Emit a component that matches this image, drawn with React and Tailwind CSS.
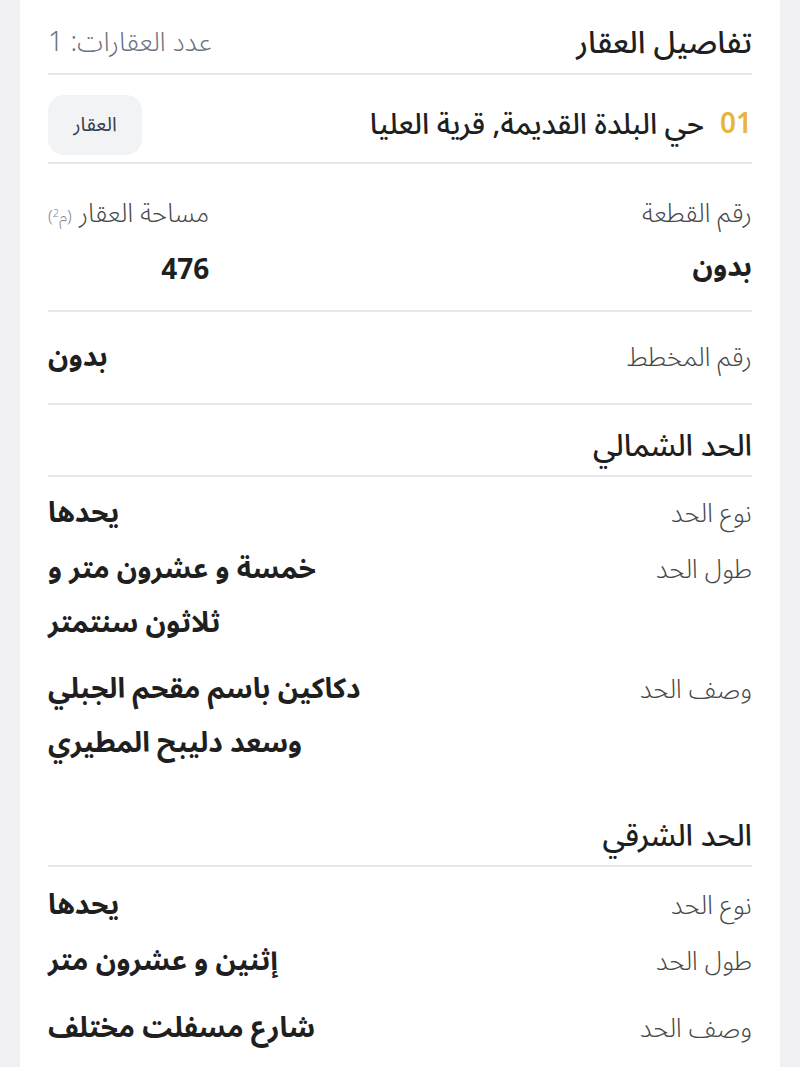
import React from 'react';

const font = { fontFamily: '"Noto Sans Arabic", "Noto Kufi Arabic", "DejaVu Sans", sans-serif' };

const Row = ({ label, lines, className = '' }) => (
  <div className={`flex items-start justify-between ${className}`}>
    <span className="text-[26px] font-light leading-[54px] text-[#474747]">{label}</span>
    <span className="text-left text-[28px] font-bold leading-[54px] text-[#1f1f1f]">
      {lines.map((l, i) => (
        <span key={i} className="block">
          {l}
        </span>
      ))}
    </span>
  </div>
);

const Section = ({ title, children }) => (
  <>
    <div className="flex h-[60px] items-center border-b-2 border-[#e8e8ea]">
      <h2 className="text-[30px] font-medium text-[#1f1f1f]">{title}</h2>
    </div>
    {children}
  </>
);

export default function App() {
  return (
    <div className="min-h-[1083px] bg-white" style={font}>
      <div className="bg-[#f1f1f3] px-[20px]">
        <div dir="rtl" className="bg-white px-[28px] pb-[11px]">
          {/* header */}
          <div className="flex h-[75px] items-center justify-between border-b-2 border-[#e8e8ea] pt-[14px]">
            <h1 className="text-[31px] font-medium text-[#1f1f1f]">تفاصيل العقار</h1>
            <span className="text-[27px] font-light text-[#6b7280]">عدد العقارات: 1</span>
          </div>

          {/* property */}
          <div className="flex items-center justify-between border-b-2 border-[#e8e8ea] pb-[7px] pt-[20px]">
            <div className="flex items-center gap-4">
              <span className="text-[28px] font-semibold text-[#e7b53c]">01</span>
              <span className="text-[29px] font-medium text-[#1f1f1f]">حي البلدة القديمة, قرية العليا</span>
            </div>
            <button className="flex h-[60px] w-[94px] items-center justify-center rounded-2xl bg-[#f2f3f5] text-[20px] text-[#374151]">
              العقار
            </button>
          </div>

          {/* plot + area */}
          <div className="flex justify-between border-b-2 border-[#e8e8ea] pb-[19px] pt-[30px]">
            <div className="flex flex-col gap-[14px]">
              <span className="text-[26px] font-light leading-[40px] text-[#474747]">رقم القطعة</span>
              <span className="text-[28px] font-bold leading-[40px] text-[#1f1f1f]">بدون</span>
            </div>
            <div className="flex flex-col gap-[14px]">
              <span className="text-[26px] font-light leading-[40px] text-[#474747]">
                مساحة العقار{' '}
                <span className="text-[17px] text-[#8a8a8a]">
                  (م<sup className="text-[11px]">2</sup>)
                </span>
              </span>
              <span className="text-[28px] font-bold leading-[40px] text-[#1f1f1f]">476</span>
            </div>
          </div>

          {/* scheme */}
          <div className="flex h-[93px] items-center justify-between border-b-2 border-[#e8e8ea]">
            <span className="text-[26px] font-light text-[#474747]">رقم المخطط</span>
            <span className="text-[28px] font-bold text-[#1f1f1f]">بدون</span>
          </div>

          <div className="pt-[12px]">
            <Section title="الحد الشمالي">
              <div className="pt-[10px]">
                <Row label="نوع الحد" lines={['يحدها']} />
                <Row label="طول الحد" lines={['خمسة و عشرون متر و', 'ثلاثون سنتمتر']} className="mt-[2px]" />
                <Row label="وصف الحد" lines={['دكاكين باسم مقحم الجبلي', 'وسعد دليبح المطيري']} className="mt-[12px]" />
              </div>
            </Section>
          </div>

          <div className="pt-[36px]">
            <Section title="الحد الشرقي">
              <div className="pt-[12px]">
                <Row label="نوع الحد" lines={['يحدها']} />
                <Row label="طول الحد" lines={['إثنين و عشرون متر']} className="mt-[2px]" />
                <Row label="وصف الحد" lines={['شارع مسفلت مختلف']} className="mt-[13px]" />
              </div>
            </Section>
          </div>
        </div>
      </div>
    </div>
  );
}
